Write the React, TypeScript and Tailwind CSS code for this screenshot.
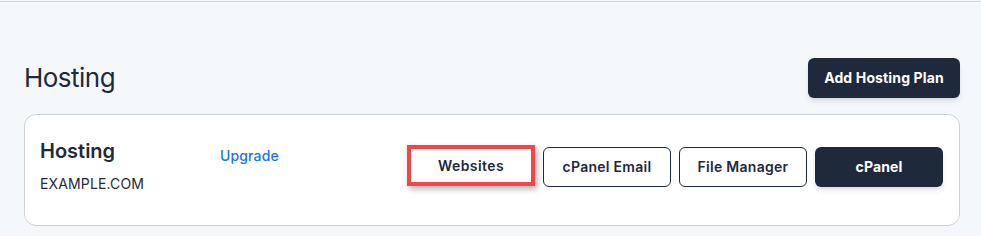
export default function App() {
  const font = { fontFamily: "Inter, 'Noto Sans', sans-serif" };

  return (
    <div className="min-h-[236px] bg-[#f5f8fb] pt-px" style={font}>
      <div className="border-t border-[#d3d7dc]">
        <div className="flex items-center justify-between pl-6 pr-[21px] pt-[56px]">
          <h1 className="text-[26px] leading-10 font-normal tracking-[-0.02em] text-[#1e293b]">
            Hosting
          </h1>
          <button
            type="button"
            className="h-10 w-[152px] rounded-md bg-[#1e293b] text-sm font-bold tracking-[0.01em] text-white shadow-md"
          >
            Add Hosting Plan
          </button>
        </div>

        <div className="ml-6 mr-[21px] mt-4 flex h-[112px] items-start rounded-xl border border-[#cdd2d8] bg-white pl-[15px] pr-4 pt-[22px]">
          <div className="w-[180px]">
            <p className="text-xl leading-7 font-semibold text-[#1e293b]">Hosting</p>
            <p className="mt-[9px] text-sm leading-5 tracking-[0.01em] text-[#1e293b]">EXAMPLE.COM</p>
          </div>

          <a href="#" className="mt-[9px] text-sm leading-5 font-medium tracking-[0.01em] text-[#1a73e8]">
            Upgrade
          </a>

          <div className="ml-auto flex items-start gap-2 pt-[8px]">
            <button
              type="button"
              className="h-[41px] w-[128px] border-4 border-[#f24646] bg-white text-sm font-semibold tracking-[0.03em] text-[#1e293b] shadow-[2px_3px_6px_rgba(0,0,0,0.3)]"
            >
              Websites
            </button>
            <button
              type="button"
              className="mt-0.5 h-10 w-[128px] rounded-md border border-[#1e293b] bg-white text-sm font-semibold tracking-[0.02em] text-[#1e293b]"
            >
              cPanel Email
            </button>
            <button
              type="button"
              className="mt-0.5 h-10 w-[128px] rounded-md border border-[#1e293b] bg-white text-sm font-semibold tracking-[0.02em] text-[#1e293b]"
            >
              File Manager
            </button>
            <button
              type="button"
              className="mt-0.5 h-10 w-[128px] rounded-md bg-[#1e293b] text-sm font-bold tracking-[0.01em] text-white shadow-md"
            >
              cPanel
            </button>
          </div>
        </div>
      </div>
    </div>
  );
}
